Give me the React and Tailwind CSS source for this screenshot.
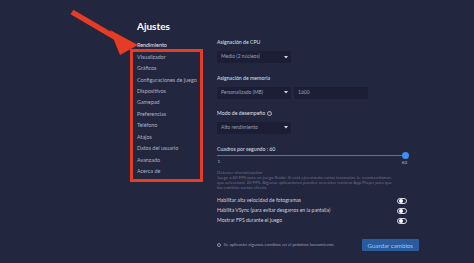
import React from 'react';

const MENU = [
  'Rendimiento',
  'Visualizador',
  'Gráficos',
  'Configuraciones de juego',
  'Dispositivos',
  'Gamepad',
  'Preferencias',
  'Teléfono',
  'Atajos',
  'Datos del usuario',
  'Avanzado',
  'Acerca de',
];

const TOGGLES = [
  'Habilitar alta velocidad de fotogramas',
  'Habilita VSync (para evitar desgarros en la pantalla)',
  'Mostrar FPS durante el juego',
];

const Caret = () => (
  <svg width="4" height="3" viewBox="0 0 4 3" className="mr-[3px]">
    <path d="M0 0 L4 0 L2 2.6 Z" fill="#d6d9e4" />
  </svg>
);

const Select = ({ value }) => (
  <div className="flex h-[12px] w-[74px] items-center justify-between rounded-[1px] bg-[#1b1e34] pl-[4px] text-[5px] text-[#9ca1b6]">
    <span>{value}</span>
    <Caret />
  </div>
);

const Toggle = () => (
  <div className="flex h-[6px] w-[10px] items-center rounded-full border-[0.8px] border-[#d8dbe6] px-[0.5px]">
    <div className="h-[4px] w-[4px] rounded-full bg-white" />
  </div>
);

const Label = ({ children }) => (
  <div className="flex h-[8px] items-center text-[5.2px] text-[#dfe1ea]">{children}</div>
);

const App = () => {
  return (
    <div className="relative h-[263px] w-[474px] overflow-hidden bg-[#23263f] font-['Lato',sans-serif]">
      <div className="pl-[137px] pt-[20px]">
        <h1 className="text-[10px] font-bold leading-[12px] text-white">Ajustes</h1>

        <div className="mt-[7px] flex">
          {/* menu lateral */}
          <nav className="w-[80px] pt-[1.3px]">
            {MENU.map((item, i) => (
              <div
                key={item}
                className={
                  'h-[11.45px] text-[5.4px] leading-[11.45px] ' +
                  (i === 0 ? 'text-[#e4e6ee]' : 'text-[#aeb2c6]')
                }
              >
                {item}
              </div>
            ))}
          </nav>

          {/* contenido */}
          <div className="w-[190px]">
            <Label>Asignación de CPU</Label>
            <div className="mt-[4px]">
              <Select value="Medio (2 núcleos)" />
            </div>

            <div className="mt-[12px]">
              <Label>Asignación de memoria</Label>
            </div>
            <div className="mt-[3.5px] flex gap-[3px]">
              <Select value="Personalizado (MB)" />
              <div className="flex h-[12px] w-[74px] items-center rounded-[1px] bg-[#1b1e34] pl-[4px] text-[5px] text-[#9ca1b6]">
                1600
              </div>
            </div>

            <div className="mt-[11px]">
              <Label>
                Modo de desempeño
                <span className="ml-[2px] flex h-[5px] w-[5px] items-center justify-center rounded-full border-[0.6px] border-[#aeb2c6] text-[3.5px] text-[#aeb2c6]">
                  i
                </span>
              </Label>
            </div>
            <div className="mt-[4px]">
              <Select value="Alto rendimiento" />
            </div>

            <div className="mt-[12px]">
              <Label>Cuadros por segundo : 60</Label>
            </div>
            <div className="relative h-[4px]">
              <div className="absolute left-0 right-[2px] top-[1.6px] h-[0.8px] bg-[#5672ad]" />
              <div className="absolute right-[-2px] top-[-1.5px] h-[7px] w-[7px] rounded-full bg-[#3d8ff0]" />
            </div>
            <div className="mt-[1px] flex justify-between text-[4.5px] leading-[5px] text-[#b8bccd]">
              <span className="pl-[0.5px]">1</span>
              <span className="pt-[1.5px]">60</span>
            </div>

            <div className="mt-[5px] text-[4.5px] leading-[5px] text-[#6b6f89]">Detener sincronización</div>
            <p className="mt-[1.3px] text-[4.4px] leading-[4.8px] text-[#6b6f89]">
              Juega a 60 FPS para un juego fluido. Si está ejecutando varias instancias, le recomendamos
              <br />
              que seleccione 20 FPS. Algunas aplicaciones pueden necesitar reiniciar App Player para que
              <br />
              los cambios surtan efecto.
            </p>

            <div className="mt-[5px]">
              {TOGGLES.map((t) => (
                <div key={t} className="flex h-[10px] items-center justify-between text-[5.1px] text-[#cdd0dc]">
                  <span>{t}</span>
                  <Toggle />
                </div>
              ))}
            </div>

            <div className="mt-[13.4px] flex w-[202px] items-center">
              <div className="h-[4px] w-[4px] rounded-full border-[0.6px] border-[#8a8ea6]" />
              <span className="ml-[2.5px] text-[4.5px] text-[#9a9eb3]">
                Se aplicarán algunos cambios en el próximo lanzamiento
              </span>
              <button className="ml-auto h-[12.3px] w-[57.5px] rounded-[1px] bg-[#2a5b9c] text-[6.2px] text-[#a6c3ee]">
                Guardar cambios
              </button>
            </div>
          </div>
        </div>
      </div>

      {/* anotación: recuadro rojo */}
      <div className="absolute left-[130px] top-[49px] h-[133px] w-[73px] border-[3px] border-[#e63b25]" />

      {/* anotación: flecha */}
      <svg className="absolute left-0 top-0" width="474" height="263" viewBox="0 0 474 263">
        <line x1="72" y1="12" x2="118" y2="39" stroke="#e63b25" strokeWidth="5.5" />
        <polygon points="110,30 120,55 138,45" fill="#e63b25" />
      </svg>
    </div>
  );
};

export default App;
